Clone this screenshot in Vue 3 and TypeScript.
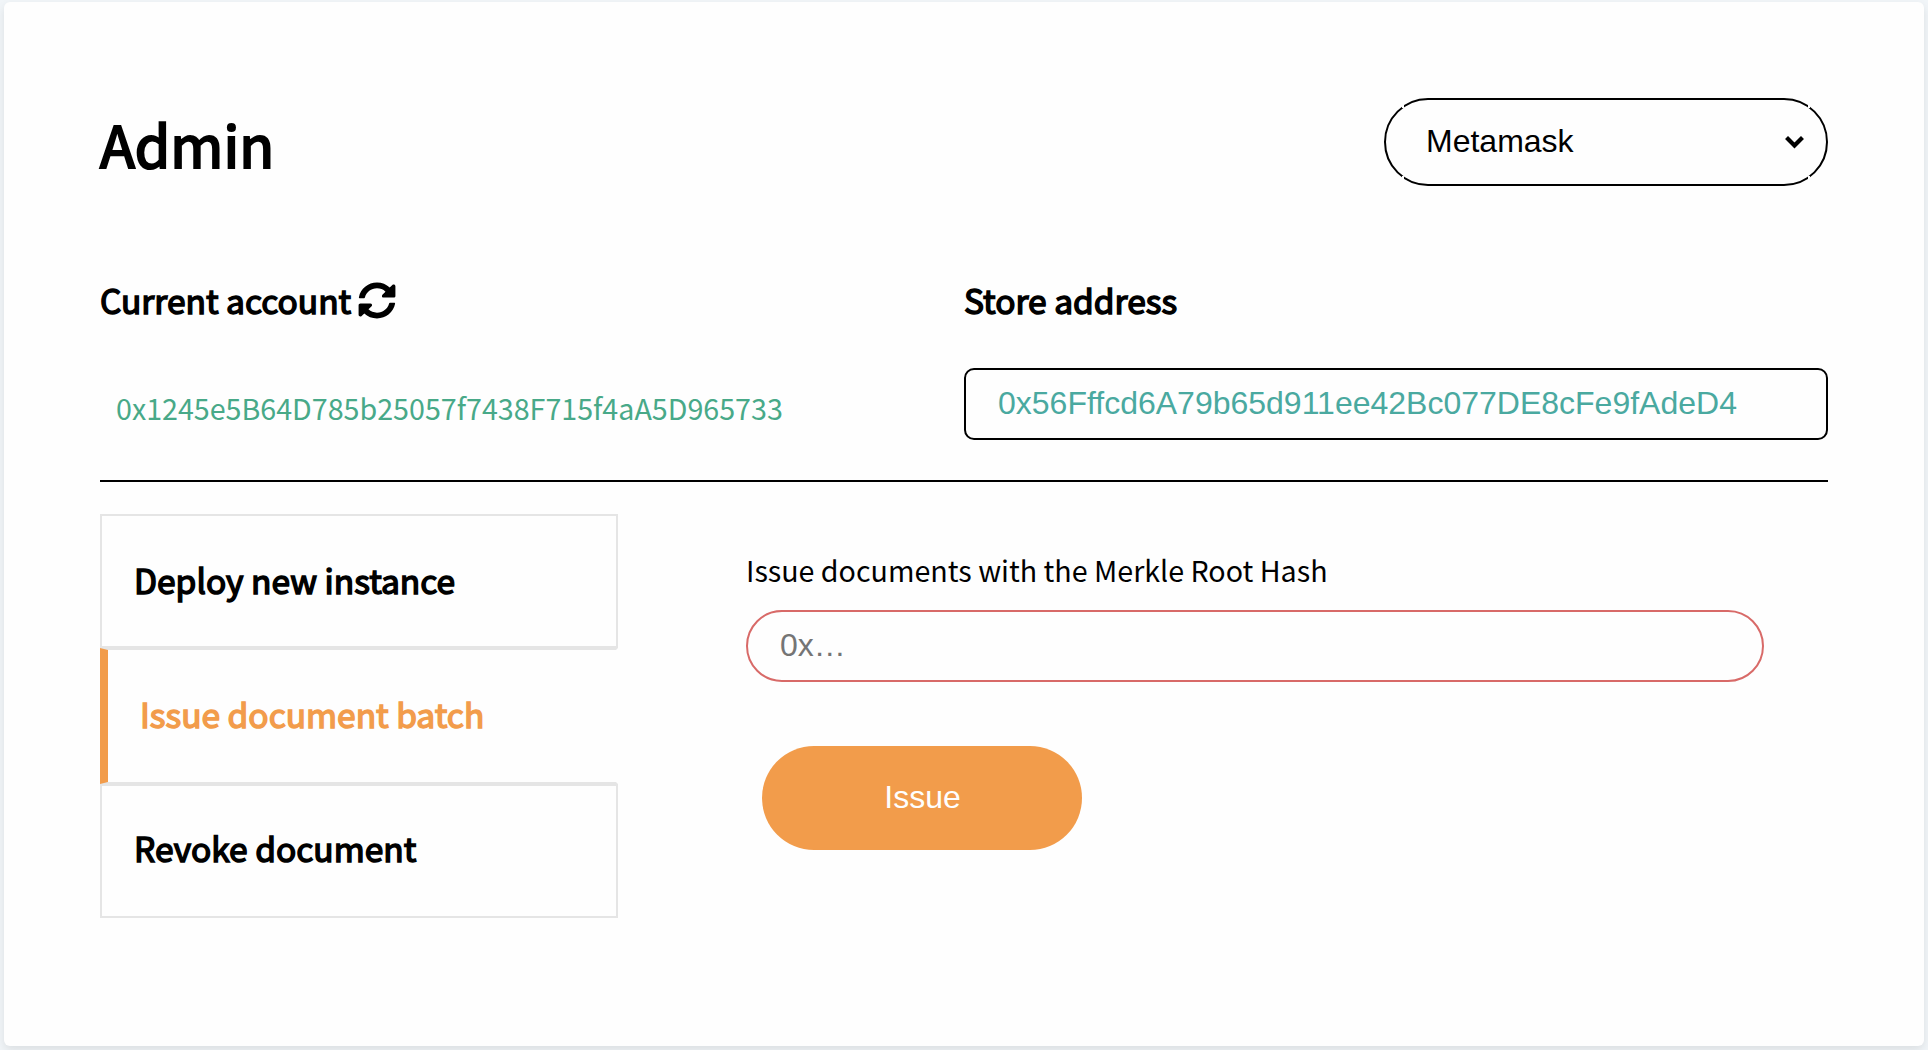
<script setup lang="ts">
import { ref } from 'vue'

interface Tab {
  id: string
  label: string
}

const tabs: Tab[] = [
  { id: 'deploy', label: 'Deploy new instance' },
  { id: 'issue', label: 'Issue document batch' },
  { id: 'revoke', label: 'Revoke document' },
]

const activeTab = ref('issue')
const provider = ref('Metamask')
const account = '0x1245e5B64D785b25057f7438F715f4aA5D965733'
const storeAddress = ref('0x56Fffcd6A79b65d911ee42Bc077DE8cFe9fAdeD4')
const merkleRoot = ref('')
</script>

<template>
  <main class="card">
    <header class="top">
      <h1 class="title">Admin</h1>
      <div class="provider">
        <select v-model="provider" class="provider-select">
          <option>Metamask</option>
        </select>
        <svg class="chevron" viewBox="0 0 18 12" width="19" height="12.6">
          <path d="M1.4 1.4 9 9l7.6-7.6" fill="none" stroke="#000" stroke-width="4" />
        </svg>
        <i class="notch tl"></i><i class="notch tr"></i><i class="notch bl"></i><i class="notch br"></i>
      </div>
    </header>

    <section class="accounts">
      <div class="col">
        <h2 class="heading">
          <span>Current account</span>
          <svg class="refresh" viewBox="0 0 512 512" width="38" height="37" preserveAspectRatio="none">
            <path d="M370.72 133.28C339.458 104.008 298.888 87.962 255.848 88c-77.458.068-144.328 53.178-162.791 126.85-1.344 5.363-6.122 9.15-11.651 9.15H24.103c-7.498 0-13.194-6.807-11.807-14.176C33.933 94.924 134.813 8 256 8c66.448 0 126.791 26.136 171.315 68.685L463.03 40.97C478.149 25.851 504 36.559 504 57.941V192c0 13.255-10.745 24-24 24H345.941c-21.382 0-32.09-25.851-16.971-40.971l41.75-41.749zM32 296h134.059c21.382 0 32.09 25.851 16.971 40.971l-41.75 41.75c31.262 29.273 71.835 45.319 114.876 45.28 77.418-.07 144.315-53.144 162.787-126.849 1.344-5.363 6.122-9.15 11.651-9.15h57.304c7.498 0 13.194 6.807 11.807 14.176C478.067 417.076 377.187 504 256 504c-66.448 0-126.791-26.136-171.315-68.685L48.97 471.03C33.851 486.149 8 475.441 8 454.059V320c0-13.255 10.745-24 24-24z" />
          </svg>
        </h2>
        <div class="account">{{ account }}</div>
      </div>
      <div class="col">
        <h2 class="heading">Store address</h2>
        <input v-model="storeAddress" class="store-input" spellcheck="false" />
      </div>
    </section>

    <section class="work">
      <nav class="tabs">
        <button
          v-for="tab in tabs"
          :key="tab.id"
          class="tab"
          :class="{ active: tab.id === activeTab }"
          @click="activeTab = tab.id"
        >{{ tab.label }}</button>
      </nav>
      <div class="panel">
        <label class="label" for="merkle-root">Issue documents with the Merkle Root Hash</label>
        <input id="merkle-root" v-model="merkleRoot" class="hash-input" placeholder="0x…" />
        <button class="issue">Issue</button>
      </div>
    </section>
  </main>
</template>

<style>
html,
body {
  margin: 0;
  background: #f1f5f8;
}
#app {
  display: flow-root;
  height: 1050px;
  overflow: hidden;
}
</style>

<style scoped>
* {
  box-sizing: border-box;
}
.card {
  width: 1920px;
  height: 1044px;
  margin: 2px 4px 0;
  padding: 96px 96px 0;
  border-radius: 6px;
  background: #fefefe;
  box-shadow: 0 4px 10px rgba(0, 0, 0, 0.09);
  color: #000;
  font-family: "Noto Sans CJK SC", sans-serif;
}
.top {
  display: flex;
  justify-content: space-between;
  height: 174px;
}
.title {
  margin: 4px 0 0;
  font-size: 57.3px;
  line-height: 84px;
  font-weight: 400;
  -webkit-text-stroke: 2.2px #000;
}
.provider {
  position: relative;
  width: 444px;
  height: 88px;
}
.provider-select {
  width: 100%;
  height: 100%;
  padding: 0 40px 2px 40px;
  border: 2px solid #000;
  border-radius: 44px;
  background: transparent;
  color: #000;
  font: 32px "Liberation Sans", sans-serif;
  appearance: none;
}
.chevron {
  position: absolute;
  right: 24.5px;
  top: 38px;
}
.notch {
  position: absolute;
  width: 2px;
  height: 3px;
  background: #fefefe;
}
.tl { left: 18px; top: 7px; }
.tr { right: 18px; top: 7px; }
.bl { left: 18px; bottom: 7px; }
.br { right: 18px; bottom: 7px; }
.accounts {
  display: flex;
  height: 210px;
  border-bottom: 2px solid #000;
}
.col {
  width: 864px;
}
.heading {
  display: flex;
  align-items: center;
  margin: 0;
  height: 56px;
  font-size: 33.5px;
  font-weight: 400;
  line-height: 56px;
  -webkit-text-stroke: 1.5px #000;
}
.refresh {
  margin: 1px 0 0 7px;
}
.refresh path {
  stroke: none;
}
.account {
  margin: 58px 0 0 16px;
  font-size: 28.65px;
  line-height: 44px;
  color: #48a988;
}
.store-input {
  display: block;
  width: 864px;
  height: 72px;
  margin-top: 40px;
  padding: 0 32px 2px;
  border: 2px solid #000;
  border-radius: 10px;
  background: #fefefe;
  color: #4aa9a0;
  font: 32px "Liberation Sans", sans-serif;
}
.work {
  display: flex;
  margin-top: 32px;
}
.tabs {
  display: flex;
  flex-direction: column;
  width: 518px;
}
.tab {
  height: 134px;
  padding: 0 32px 4px;
  border: 2px solid #e5e5e5;
  background: #fefefe;
  color: #000;
  font: 400 33.5px "Noto Sans CJK SC", sans-serif;
  text-align: left;
  -webkit-text-stroke: 1.5px currentColor;
}
.tab:last-child {
  padding-bottom: 8px;
}
.tab.active {
  height: 136px;
  padding-bottom: 6px;
  border-left: 8px solid #f29c4b;
  border-right-color: transparent;
  color: #f29c4b;
}
.panel {
  display: flex;
  flex-direction: column;
  align-items: flex-start;
  margin-left: 128px;
  padding-top: 32px;
}
.label {
  height: 64px;
  font-size: 28.65px;
  line-height: 48px;
}
.hash-input {
  width: 1018px;
  height: 72px;
  padding: 0 32px 2px;
  border: 2px solid #d86a68;
  border-radius: 36px;
  background: #fefefe;
  font: 32px "Liberation Sans", sans-serif;
}
.hash-input::placeholder {
  color: #757575;
}
.issue {
  width: 320px;
  height: 104px;
  margin: 64px 0 0 16px;
  padding: 0 0 2px 1px;
  border: 0;
  border-radius: 52px;
  background: #f29c4b;
  color: #fefefe;
  font: 32px "Liberation Sans", sans-serif;
}
</style>
